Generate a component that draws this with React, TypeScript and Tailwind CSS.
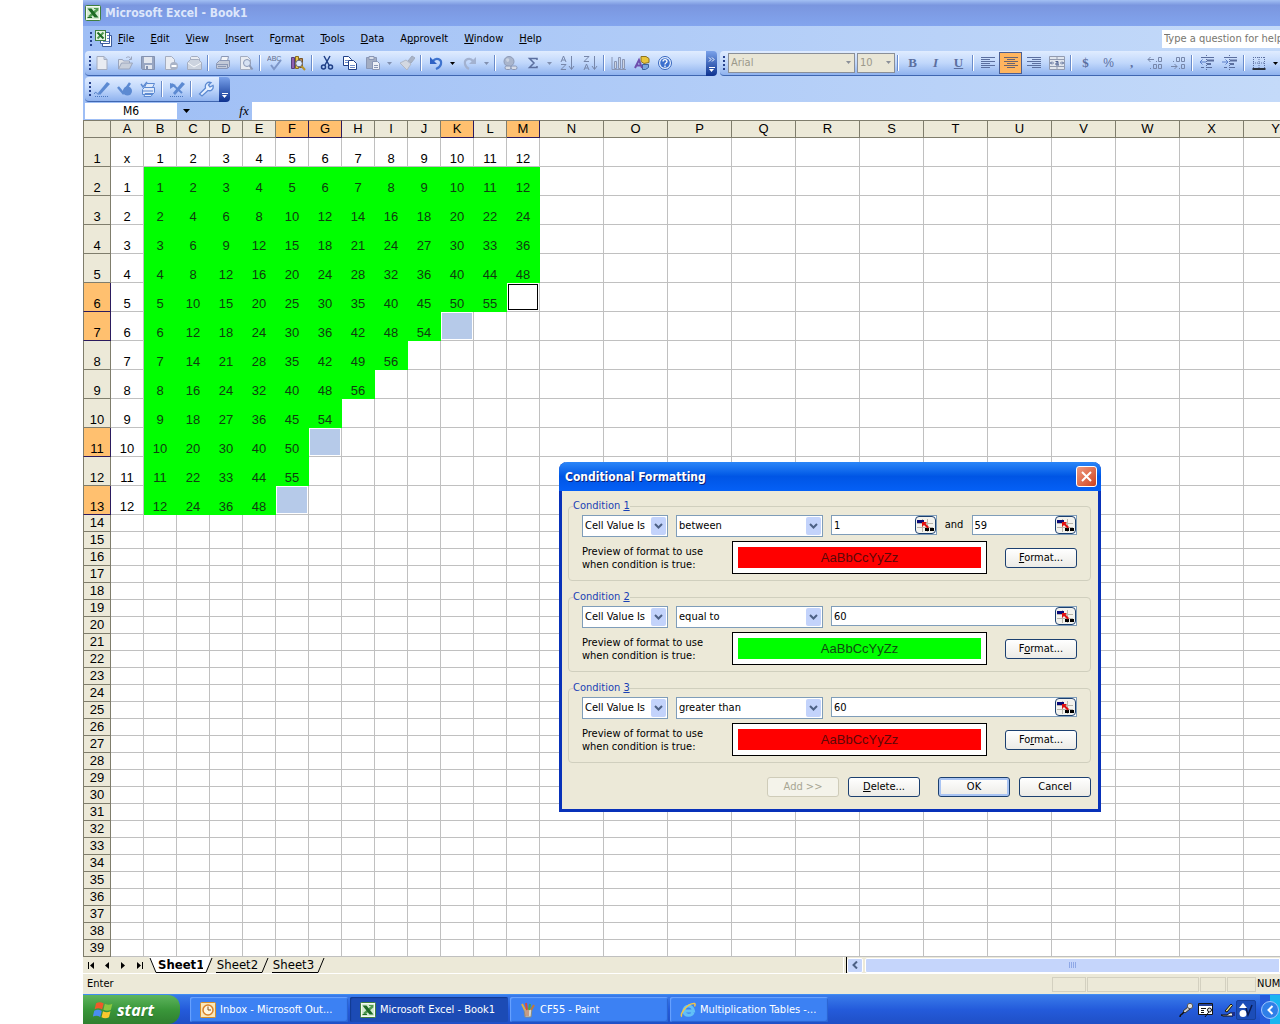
import type { ReactNode } from "react";
import { clsx } from "clsx";

const g = "#8a97b5";
const navy = "#1f3f86";

const Svg = ({ children, size = 16 }: { children: ReactNode; size?: number }) => (
  <svg width={size} height={size} viewBox="0 0 16 16" fill="none" className="shrink-0">
    {children}
  </svg>
);

const icons: Record<string, ReactNode> = {
  New: <path d="M3 1.500h7l3 3v10H3zM10 1.500v3h3" fill="#e9ecf2" stroke="#a4adc0" />,
  Open: (
    <>
      <path d="M1.500 14V4.500h4l1 1.500h6V8" fill="#dfe2e8" stroke="#9aa5bd" />
      <path d="M1.500 14l3-6h11l-3 6z" fill="#c8cfdb" stroke="#9aa5bd" />
      <path d="M9 3c2-2 4-1 5 1M14.500 1.500V4.500H12" stroke="#9aa5bd" />
    </>
  ),
  Save: (
    <>
      <path d="M1.500 1.500h13v13h-12l-1-1z" fill="#98a6c2" stroke="#8492b0" />
      <path d="M4 2h8v6H4zM5 10h7v4H5z" fill="#e3e7ef" />
      <path d="M6 11h2v3H6z" fill="#8492b0" />
    </>
  ),
  Permission: (
    <>
      <path d="M2.500 1.500h6l3 3v10h-9z" fill="#e9ecf2" stroke="#a4adc0" />
      <circle cx="11" cy="11" r="4" fill="#a9b3c6" />
      <path d="M8.500 11h5" stroke="#fff" strokeWidth="2" />
    </>
  ),
  "E-mail": (
    <>
      <path d="M4.500 5V2.500l1-1h6l2 2V8" fill="#e9ecf2" stroke="#a4adc0" />
      <path d="M1.500 7.500l3-3h8l3 3v7h-14z" fill="#ccd3df" stroke="#a4adc0" />
      <path d="M2 8l6 4 7-4" stroke="#f6f8fb" />
    </>
  ),
  Print: (
    <>
      <path d="M5.500 6l1-4.500h7l-1 4.500" fill="#f2f4f8" stroke={g} />
      <path d="M1.500 8.500l3-3h10v6l-2 2h-11z" fill="#c3cad8" stroke={g} />
      <path d="M2 9.500h10M3 11.500h8M12.500 9v4" stroke={g} />
    </>
  ),
  "Print Preview": (
    <>
      <path d="M2.500 1.500h7l3 3v10h-10z" fill="#e9ecf2" stroke="#a4adc0" />
      <circle cx="9" cy="8" r="3.500" fill="#d7e2f3" stroke={g} />
      <path d="M11.500 10.500l3 4" stroke={g} strokeWidth="2" />
    </>
  ),
  Spelling: (
    <>
      <text x="0" y="6" fontSize="7" fill="#5f6d8c" className="font-['Liberation_Sans',sans-serif]">ABC</text>
      <path d="M4 10l3 4 7-9" stroke="#7d96c8" strokeWidth="2" />
    </>
  ),
  Research: (
    <>
      <path d="M1.500 2.500h3v11h-3z" fill="#8f5fb0" stroke="#55407c" />
      <path d="M5.500 1.500h3v12h-3z" fill="#e8c84a" stroke="#8a6c1d" />
      <path d="M9.500 3.500h3v9h-3z" fill="#b98a54" stroke="#775427" />
      <circle cx="9" cy="8.500" r="3.300" fill="#dbe9fb" stroke="#6a6a78" />
      <path d="M11.500 11l3.500 4" stroke="#b5932d" strokeWidth="2" />
    </>
  ),
  Cut: (
    <>
      <path d="M5 1l5 9M11 1L6 10" stroke={navy} strokeWidth="1.500" />
      <circle cx="4.500" cy="12" r="2" stroke={navy} strokeWidth="1.500" />
      <circle cx="11.500" cy="12" r="2" stroke={navy} strokeWidth="1.500" />
    </>
  ),
  Copy: (
    <>
      <path d="M1.500 1.500h5l3 3v6h-8z" fill="#fff" stroke={navy} />
      <path d="M6.500 5.500h5l3 3v6h-8z" fill="#fff" stroke={navy} />
      <path d="M3 5.500h3M3 7.500h3M8 10.500h5M8 12.500h5" stroke="#6e8cc8" />
    </>
  ),
  Paste: (
    <>
      <path d="M1.500 2.500h10v11h-10z" fill="#a3adc2" stroke={g} />
      <path d="M4 1.500h5v3H4z" fill="#d9dee8" stroke={g} />
      <path d="M7.500 6.500h5l2 2v6h-7z" fill="#eef1f6" stroke={g} />
      <path d="M9 10.500h4M9 12.500h4" stroke={g} />
    </>
  ),
  "Format Painter": (
    <>
      <path d="M9 6l4-5 3 2-4 5z" fill="#aab4c6" stroke="#a0aabd" />
      <path d="M1 8l6-3 5 4-4 6z" fill="#d3d8e1" stroke="#b0b8c7" />
    </>
  ),
  Undo: (
    <>
      <path d="M5 6c3-4 9-2 8 3-.5 3-3 4-5 5" stroke="#3f74cf" strokeWidth="2.200" />
      <path d="M2 2v7h7z" fill="#2f62c4" />
    </>
  ),
  Redo: (
    <>
      <path d="M11 6c-3-4-9-2-8 3 .5 3 2 4 4 5" stroke="#a3b2d0" strokeWidth="2.200" />
      <path d="M14 2v7H7z" fill="#a3b2d0" />
    </>
  ),
  Hyperlink: (
    <>
      <circle cx="7" cy="6.500" r="5" fill="#a9b5cc" stroke="#8e9bb6" />
      <path d="M4 4c2-2 4 0 3 2s-3 1-3-2z" fill="#c9d1e0" />
      <rect x="3" y="11" width="6" height="3.500" rx="1.700" stroke={g} fill="#d5dbe7" />
      <rect x="9" y="11" width="6" height="3.500" rx="1.700" stroke={g} fill="#d5dbe7" />
    </>
  ),
  AutoSum: <path d="M12 5V3.500H4.500L9 8l-4.500 4.500H12V11" stroke="#5b6f9f" strokeWidth="1.500" />,
  "Sort Ascending": (
    <>
      <path d="M2 7l2.500-6L7 7M3 5h3M2 9.500h5l-5 5h5" stroke="#7787aa" />
      <path d="M12.500 1v13M10 11l2.500 3.500L15 11" stroke="#7787aa" />
    </>
  ),
  "Sort Descending": (
    <>
      <path d="M2 1.500h5l-5 5h5M2 15l2.500-6L7 15M3 13h3" stroke="#7787aa" />
      <path d="M12.500 1v13M10 11l2.500 3.500L15 11" stroke="#7787aa" />
    </>
  ),
  "Chart Wizard": (
    <>
      <path d="M1 2v12.500h14" stroke={g} />
      <path d="M3.500 6.500h2v7h-2zM7.500 2.500h2v11h-2zM11.500 4.500h2v9h-2z" fill="#cdd4e1" stroke={g} />
    </>
  ),
  Drawing: (
    <>
      <path d="M7 1.500h5l3 2v4l-5 1-3-2z" fill="#e9c53b" stroke="#8d7321" />
      <path d="M8.500 9.500h6v3l-3 2h-3z" fill="#7aa5de" stroke="#39619f" />
      <path d="M1 13l4-8 3 8M2.500 10.500h5" stroke="#6e4fae" strokeWidth="2" />
    </>
  ),
  "Microsoft Excel Help": (
    <>
      <circle cx="8" cy="8" r="6.500" fill="#e8f1ff" stroke="#3565be" />
      <circle cx="8" cy="8" r="4.800" fill="#3c70cf" />
      <path d="M6 6.500c0-2.500 4-2.500 4 0 0 1.300-2 1.300-2 3M8 10.500V12" stroke="#fff" strokeWidth="1.300" />
    </>
  ),
  "Align Left": <path d="M1 2.500h14M1 4.500h9M1 6.500h14M1 8.500h9M1 10.500h14M1 12.500h9" stroke="#5b6f9f" />,
  Center: <path d="M1 2.500h14M4 4.500h8M1 6.500h14M4 8.500h8M1 10.500h14M4 12.500h8" stroke="#6b6470" />,
  "Align Right": <path d="M1 2.500h14M6 4.500h9M1 6.500h14M6 8.500h9M1 10.500h14M6 12.500h9" stroke="#5b6f9f" />,
  "Merge and Center": (
    <>
      <path d="M0.500 1.500h15v13H0.500zM0.500 4.500h15M0.500 11.500h15M8 2v3M8 11v3" fill="#e1e6ee" stroke="#929bb0" />
      <path d="M1 8h4M15 8h-4M3 6.500L1.500 8 3 9.500M13 6.500L14.500 8 13 9.500" stroke="#66779e" />
      <path d="M6.500 6.500h2.500v3.500M9 8H7v2h3" stroke="#4e6090" />
    </>
  ),
  "Increase Decimal": (
    <>
      <path d="M1 4.500h6M3.500 2L1 4.500 3.500 7" stroke="#7787aa" />
      <path d="M9 6.500h1M3 13.500h1" stroke="#7787aa" />
      <path d="M11.500 2.500h3v4h-3zM6.500 9.500h3v4h-3zM11.500 9.500h3v4h-3z" stroke="#7787aa" />
    </>
  ),
  "Decrease Decimal": (
    <>
      <path d="M1 11.500h6M4.500 9L7 11.500 4.500 14" stroke="#7787aa" />
      <path d="M3 6.500h1M9 13.500h1" stroke="#7787aa" />
      <path d="M6.500 2.500h3v4h-3zM11.500 2.500h3v4h-3zM11.500 9.500h3v4h-3z" stroke="#7787aa" />
    </>
  ),
  "Decrease Indent": (
    <>
      <path d="M2 2.500h13M8 12.500h5M2 12.500h3" stroke="#5b6f9f" />
      <path d="M8 5.500h7M8 9h4" stroke="#5b6f9f" strokeWidth="2" />
      <path d="M1 7h6M3.500 4.500L1 7l2.500 2.500" stroke="#5b7fc9" />
      <path d="M7.500 0v16" stroke="#5b6f9f" strokeDasharray="1 1" />
    </>
  ),
  "Increase Indent": (
    <>
      <path d="M2 2.500h13M8 12.500h5M2 12.500h3" stroke="#5b6f9f" />
      <path d="M8 5.500h7M8 9h4" stroke="#5b6f9f" strokeWidth="2" />
      <path d="M0 7h6M3.500 4.500L6 7 3.500 9.500" stroke="#5b7fc9" />
      <path d="M7.500 0v16" stroke="#5b6f9f" strokeDasharray="1 1" />
    </>
  ),
  Borders: (
    <>
      <path d="M2.500 2v11M8 2v11M13.500 2v11M2 2.500h12M2 8h12" stroke="#5b6f9f" strokeDasharray="1 1" />
      <path d="M1.500 14h13" stroke="#000" strokeWidth="1.500" />
    </>
  ),
  Sign: (
    <>
      <path d="M4 12l9-11 3 2L6 14z" fill="#5c8ad2" />
      <path d="M0 13c2-4 3 1 5 0" stroke="#4a78c0" />
      <path d="M1 15.500h14" stroke="#4a78c0" strokeDasharray="1 1" />
    </>
  ),
  Approve: (
    <>
      <circle cx="10.500" cy="10" r="4.500" fill="#5c8ad2" />
      <path d="M1 6l5 6 7-10" stroke="#5c8ad2" strokeWidth="2.500" />
    </>
  ),
  "Print Approved": (
    <>
      <path d="M1 3l2 3 4-5" stroke="#5c8ad2" strokeWidth="1.500" />
      <path d="M6.500 2.500h8l-2 4h-8zM2.500 8.500l2-2h10v5l-2 2h-10zM3 10h10M5 12.500h8l-2 3H4z" fill="#dfeafb" stroke="#5c8ad2" />
    </>
  ),
  "Remove Approval": (
    <>
      <path d="M3 3l10 9" stroke="#5c8ad2" strokeWidth="2" />
      <path d="M4 12l9-11 3 2L6 14z" fill="#5c8ad2" />
      <path d="M1 2v6l6-4z" fill="#5c8ad2" />
      <path d="M1 15.500h14" stroke="#4a78c0" strokeDasharray="1 1" />
    </>
  ),
  Settings: (
    <path
      d="M1.500 13l6-6c-1-4 2-6.500 5.500-5.500L10.500 4l1.500 2 3-1.500c1 3.500-2 6-5 5l-6 5.500z"
      fill="#e6f0ff"
      stroke="#5c8ad2"
      strokeWidth="1.300"
    />
  ),
};

const glyphs: Record<string, ReactNode> = {
  Bold: <b>B</b>,
  Italic: <i className="font-bold">I</i>,
  Underline: <b className="underline">U</b>,
  Currency: <b>$</b>,
  Percent: <span className="font-['Liberation_Sans',sans-serif] text-xs">%</span>,
  Comma: <b>,</b>,
};

// "|" is a separator, ":v" adds a drop-down arrow, ":on" makes that arrow black
const standardBar = [
  "New", "Open", "Save", "Permission", "E-mail", "|", "Print", "Print Preview", "|", "Spelling", "Research", "|",
  "Cut", "Copy", "Paste:v", "Format Painter", "|", "Undo:v:on", "Redo:v", "|", "Hyperlink", "AutoSum:v",
  "Sort Ascending", "Sort Descending", "|", "Chart Wizard", "Drawing", "Microsoft Excel Help",
];

const formatBar = [
  "|", "Bold", "Italic", "Underline", "|", "Align Left", "Center", "Align Right", "Merge and Center", "|",
  "Currency", "Percent", "Comma", "Increase Decimal", "Decrease Decimal", "|",
  "Decrease Indent", "Increase Indent", "|", "Borders:v:on",
];

const approveBar = ["Sign", "Approve", "Print Approved", "|", "Remove Approval", "|", "Settings"];

const menus = [
  { label: "File", key: 0 },
  { label: "Edit", key: 0 },
  { label: "View", key: 0 },
  { label: "Insert", key: 0 },
  { label: "Format", key: 1 },
  { label: "Tools", key: 0 },
  { label: "Data", key: 0 },
  { label: "ApproveIt", key: 1 },
  { label: "Window", key: 0 },
  { label: "Help", key: 0 },
];

const columns = "ABCDEFGHIJKLMNOPQRSTUVWXY".split("");
const activeColumns = ["F", "G", "K", "M"];
const activeRows = [6, 7, 11, 13];

const conditions = [
  { id: 1, op: "between", value: "1", value2: "59", fill: "bg-[#ff0000] text-[#5c0808]", key: 0 },
  { id: 2, op: "equal to", value: "60", fill: "bg-[#00ff00] text-[#104a10]", key: 1 },
  { id: 3, op: "greater than", value: "60", fill: "bg-[#ff0000] text-[#5c0808]", key: 2 },
];

function Mnemonic({ text, at }: { text: string; at: number }) {
  return (
    <span>
      {text.slice(0, at)}
      <u>{text[at]}</u>
      {text.slice(at + 1)}
    </span>
  );
}

function Triangle({ className }: { className?: string }) {
  return (
    <svg width="5" height="3" viewBox="0 0 5 3" className={className}>
      <path d="M0 0h5L2.500 3z" fill="currentColor" />
    </svg>
  );
}

function ExcelIcon() {
  return (
    <Svg>
      <rect x="0.500" y="0.500" width="15" height="15" rx="1" fill="#f4faf1" stroke="#3f7f3f" />
      <path d="M2 2h12v12H2z" fill="#d3ead0" />
      <path d="M13 4l-9 8" stroke="#4f9a50" strokeWidth="2.500" />
      <path d="M2.500 3.500h4l7 9h-4z" fill="#1d6b25" />
      <path d="M9 3.500h4.500" stroke="#4f9a50" />
      <path d="M2.500 12.500H7" stroke="#1d6b25" />
    </Svg>
  );
}

function Grip() {
  return (
    <span className="flex w-2 shrink-0 flex-col items-center gap-0.5">
      {[0, 1, 2, 3].map((i) => (
        <span key={i} className="size-0.5 bg-[#27418c]" />
      ))}
    </span>
  );
}

function ToolItems({ items }: { items: string[] }) {
  return items.map((item, i) => {
    if (item === "|") {
      return (
        <span key={i} className="flex w-1.5 shrink-0 justify-center">
          <span className="h-4 w-px bg-[#6a8ccb]" />
          <span className="h-4 w-px bg-white" />
        </span>
      );
    }
    const [name, drop, on] = item.split(":");
    return (
      <span key={i} className="flex shrink-0 items-center">
        <button
          aria-label={name}
          className={clsx(
            "flex h-[22px] w-[23px] items-center justify-center font-['Liberation_Serif',serif] text-[13px] text-[#5b6f9f]",
            name === "Center" && "border border-[#4b5f94] bg-[#ffb55f]"
          )}
        >
          {glyphs[name] ?? <Svg>{icons[name]}</Svg>}
        </button>
        {drop && (
          <button aria-label={name + " options"} className="flex h-5 w-[11px] items-center justify-center">
            <Triangle className={on ? "text-black" : "text-[#8190b0]"} />
          </button>
        )}
      </span>
    );
  });
}

const barClass =
  "flex h-[25px] shrink-0 items-center rounded-l-sm border-b border-[#3f66b0] bg-linear-to-b from-[#e0ecff] via-[#c0d7fb] to-[#8fb2ee]";
const capClass =
  "flex h-[25px] w-[11px] shrink-0 flex-col items-center justify-end gap-px rounded-r-sm bg-linear-to-b from-[#7aa1ea] to-[#0e318f] pb-1 text-white";

function ExcelTop() {
  return (
    <>
      <header className="flex h-[26px] items-center gap-1 overflow-hidden bg-linear-to-b from-[#a3c0f3] via-[#7a96df] via-20% to-[#83a5ee] pl-0.5 text-xs font-bold text-[#dce6fb]">
        <ExcelIcon />
        <h1>Microsoft Excel - Book1</h1>
      </header>

      <div className="bg-linear-to-r from-[#9ebef5] to-[#c4daf9]">
        <nav className="flex h-[25px] items-center pl-1">
          <Grip />
          <span className="mr-1.5 flex w-[17px] items-center">
            <svg width="17" height="17" viewBox="0 0 17 17" fill="none">
              <path d="M7.500 5.500h9v11h-9z" fill="#fff" stroke="#3b5b9b" />
              <path d="M5.500 2.500h9v11h-9z" fill="#fff" stroke="#3b5b9b" />
              <path d="M12 5.500h2M12 8.500h2M8 11.500h6" stroke="#6e8cc8" />
              <rect x="0.500" y="0.500" width="10" height="10" fill="#e5f3e1" stroke="#3f7f3f" />
              <path d="M8.500 2.500l-6 6" stroke="#4f9a50" strokeWidth="2" />
              <path d="M2.500 2.500l6 6" stroke="#1d6b25" strokeWidth="2" />
            </svg>
          </span>
          <div className="flex gap-4">
            {menus.map((m) => (
              <button key={m.label}>
                <Mnemonic text={m.label} at={m.key} />
              </button>
            ))}
          </div>
          <input
            aria-label="Type a question for help"
            placeholder="Type a question for help"
            className="ml-auto h-[18px] w-[118px] bg-white pl-0.5 placeholder:text-[#77766f]"
          />
        </nav>

        <div className="flex overflow-hidden">
          <div className="flex w-[634px] shrink-0 pl-0.5">
            <div className={clsx(barClass, "flex-1 pl-px")}>
              <Grip />
              <div className="-ml-1 flex items-center">
                <ToolItems items={standardBar} />
              </div>
            </div>
            <button aria-label="Standard toolbar options" className={capClass}>
              <svg width="7" height="5" viewBox="0 0 7 5" fill="none" className="mb-1">
                <path d="M1 0.500l2 2-2 2M4 0.500l2 2-2 2" stroke="#fff" />
              </svg>
              <span className="h-px w-1.5 bg-white" />
              <Triangle />
            </button>
          </div>
          <div className={clsx(barClass, "ml-[3px] flex-1")}>
            <Grip />
            <span className="relative mr-0.5">
              <select
                aria-label="Font"
                disabled
                className="block h-5 w-[127px] appearance-none border border-[#8a8f98] bg-[#e9e6d6] pl-0.5 text-[#9b998b] opacity-100"
              >
                <option>Arial</option>
              </select>
              <Triangle className="absolute top-2 right-1 text-[#8a8f98]" />
            </span>
            <span className="relative">
              <select
                aria-label="Font size"
                disabled
                className="block h-5 w-[38px] appearance-none border border-[#8a8f98] bg-[#e9e6d6] pl-0.5 text-[#9b998b] opacity-100"
              >
                <option>10</option>
              </select>
              <Triangle className="absolute top-2 right-1 text-[#8a8f98]" />
            </span>
            <ToolItems items={formatBar} />
          </div>
        </div>

        <div className="flex h-[26px] items-center pl-0.5">
          <div className={clsx(barClass, "pr-0.5 pl-px")}>
            <Grip />
            <div className="-ml-1 flex items-center">
              <ToolItems items={approveBar} />
            </div>
          </div>
          <button aria-label="ApproveIt toolbar options" className={capClass}>
            <span className="h-px w-1.5 bg-white" />
            <Triangle />
          </button>
        </div>

        <div className="flex h-[18px] items-center">
          <input
            aria-label="Name box"
            defaultValue="M6"
            className="ml-0.5 h-4 w-[92px] bg-white text-center text-xs"
          />
          <button aria-label="Names" className="flex h-4 w-[18px] items-center justify-center">
            <svg width="7" height="4" viewBox="0 0 7 4">
              <path d="M0 0h7L3.500 4z" />
            </svg>
          </button>
          <button
            aria-label="Insert function"
            className="ml-auto w-4 font-['Liberation_Serif',serif] text-[13px] leading-4 italic"
          >
            fx
          </button>
          <input aria-label="Formula bar" className="h-[18px] w-[calc(100%-169px)] bg-white" />
        </div>
      </div>
    </>
  );
}

const headCell = "overflow-hidden border-r border-b p-0 text-center font-normal";

function Sheet() {
  const rows = Array.from({ length: 39 }, (_, i) => i + 1);
  return (
    <div className="overflow-hidden bg-white font-['Liberation_Sans',Arial,sans-serif] text-[13px] leading-4">
      <table className="w-full table-fixed border-separate border-spacing-0">
        <colgroup>
          <col className="w-7" />
          {columns.map((c) => (
            <col key={c} className={c <= "M" ? "w-[33px]" : "w-16"} />
          ))}
        </colgroup>
        <thead>
          <tr>
            <th className={clsx(headCell, "h-[18px] border-t border-l border-[#7f7d6c] bg-[#ece9d8]")} />
            {columns.map((c) => (
              <th
                key={c}
                className={clsx(
                  headCell,
                  "border-t border-t-[#7f7d6c]",
                  activeColumns.includes(c)
                    ? "border-r-[#2b1b5e] border-b-[#2b1b5e] bg-[#ffc06f]"
                    : "border-r-[#7f7d6c] border-b-[#7f7d6c] bg-[#ece9d8]"
                )}
              >
                {c}
              </th>
            ))}
          </tr>
        </thead>
        <tbody>
          {rows.map((row) => (
            <tr key={row}>
              <th
                className={clsx(
                  headCell,
                  "border-l border-l-[#7f7d6c] align-bottom",
                  row <= 13 ? "h-[29px] leading-[14px]" : "h-[17px]",
                  activeRows.includes(row)
                    ? "border-r-[#2b1b5e] border-b-[#2b1b5e] bg-[#ffc06f]"
                    : "border-r-[#7f7d6c] border-b-[#7f7d6c] bg-[#ece9d8]"
                )}
              >
                {row}
              </th>
              {columns.map((c, col) => (
                <Cell key={c} row={row} col={col} />
              ))}
            </tr>
          ))}
        </tbody>
      </table>
    </div>
  );
}

function Cell({ row, col }: { row: number; col: number }) {
  const product = (row - 1) * col;
  const inGrid = row <= 13 && col <= 12;
  let text: string | number = "";
  if (row === 1 && col === 0) text = "x";
  else if (inGrid && row === 1) text = col;
  else if (inGrid && col === 0) text = row - 1;
  else if (inGrid && product < 60) text = product;

  const filled = inGrid && product > 0 && product < 60;
  const selected = inGrid && product === 60;
  return (
    <td
      className={clsx(
        "border-r border-b p-0 text-center align-bottom leading-[14px]",
        filled ? "border-[#00ff00] bg-[#00ff00] text-[#103c10]" : "border-[#c0c0c0]"
      )}
    >
      {selected ? (
        <div className={clsx("m-px h-[26px]", row === 6 ? "border border-black" : "bg-[#b6cae9]")} />
      ) : (
        text
      )}
    </td>
  );
}

function TabStrip() {
  return (
    <div className="flex h-[17px] items-stretch overflow-hidden border-b border-white bg-[#ece9d8]">
      <div className="flex w-[66px] items-center">
        <button aria-label="First sheet" className="flex w-4 justify-center">
          <svg width="7" height="7"><path d="M0 0h1v7H0zM6 0v7L2 3.500z" /></svg>
        </button>
        <button aria-label="Previous sheet" className="flex w-4 justify-center">
          <svg width="4" height="7"><path d="M4 0v7L0 3.500z" /></svg>
        </button>
        <button aria-label="Next sheet" className="flex w-4 justify-center">
          <svg width="4" height="7"><path d="M0 0v7l4-3.500z" /></svg>
        </button>
        <button aria-label="Last sheet" className="flex w-4 justify-center">
          <svg width="7" height="7"><path d="M6 0h1v7H6zM1 0v7l4-3.500z" /></svg>
        </button>
      </div>
      <div className="flex text-[13px] leading-4">
        {["Sheet1", "Sheet2", "Sheet3"].map((name, i) => (
          <button key={name} className={clsx("flex", i === 0 && "font-bold")}>
            {i === 0 && (
              <svg width="9" height="16"><path d="M0 0h9v16H7z" fill="#fff" /><path d="M1 1l6 14.500h2" stroke="#000" fill="none" /></svg>
            )}
            <span className={clsx("h-4 border-b border-black", i === 0 ? "w-[45px] bg-white" : "w-[43px]")}>{name}</span>
            <svg width="13" height="16">
              {i === 0 && <path d="M0 0h8L2 16H0z" fill="#fff" />}
              <path d="M0 15.500h3L9 1" stroke="#000" fill="none" />
            </svg>
          </button>
        ))}
      </div>
      <div className="ml-auto flex w-[437px] items-center">
        <span className="h-4 w-1 border-r border-l border-l-white border-r-black" />
        <button aria-label="Scroll left" className="flex h-[15px] w-4 items-center justify-center rounded-xs border border-white bg-[#c5d5fb]">
          <svg width="6" height="8"><path d="M5 0.500L1.500 4 5 7.500" stroke="#4d6185" strokeWidth="2" fill="none" /></svg>
        </button>
        <span className="ml-0.5 flex h-[15px] flex-1 items-center justify-center gap-px rounded-l-xs border border-white bg-[#c5d5fb]">
          {[0, 1, 2, 3].map((i) => (
            <span key={i} className="h-1.5 w-px bg-[#8fa8e6]" />
          ))}
        </span>
      </div>
    </div>
  );
}

function StatusBar() {
  const box = "h-[15px] border border-[#d3d0c0]";
  return (
    <footer className="flex h-5 items-center gap-px bg-[#ece9d8] pl-1">
      <span className="mr-auto">Enter</span>
      <span className={clsx(box, "w-[34px]")} />
      <span className={clsx(box, "w-[112px]")} />
      <span className={clsx(box, "w-[26px]")} />
      <span className={clsx(box, "w-[29px]")} />
      <span className="w-[23px] overflow-hidden whitespace-nowrap">NUM</span>
    </footer>
  );
}

const tasks = [
  {
    label: "Inbox - Microsoft Out...",
    icon: (
      <Svg>
        <rect x="0.500" y="0.500" width="15" height="15" rx="1" fill="#fbe7b8" stroke="#d78f2a" />
        <circle cx="8" cy="8" r="5" fill="#fff6df" stroke="#d9822b" strokeWidth="1.500" />
        <path d="M8 4.500V8h3" stroke="#8a5216" />
      </Svg>
    ),
  },
  { label: "Microsoft Excel - Book1", icon: <ExcelIcon />, active: true },
  {
    label: "CF55 - Paint",
    icon: (
      <Svg>
        <path d="M4 7h8l-1 8H5z" fill="#d8d8d0" stroke="#8a8a80" />
        <path d="M6 8v6M8 8v6" stroke="#b0603a" />
        <path d="M5 8L2 2" stroke="#e0b040" strokeWidth="2" />
        <path d="M7 8L6 1" stroke="#d84a3a" strokeWidth="2" />
        <path d="M9 8l1-6" stroke="#49a84c" strokeWidth="2" />
        <path d="M11 8l3-5" stroke="#c07a3a" strokeWidth="2" />
      </Svg>
    ),
  },
  {
    label: "Multiplication Tables -...",
    icon: (
      <Svg>
        <path d="M13 10.500c-1.500 4-8.500 4-9-1.500-.5-6 8.500-7 9.500 0H5" stroke="#62c0f7" strokeWidth="3" />
        <path d="M2 14.500C-1 13 7 1 14.500 1.500c1 .5.500 2 0 3" stroke="#f0c64a" strokeWidth="1.500" />
      </Svg>
    ),
  },
];

function Taskbar() {
  return (
    <div className="flex h-[30px] items-center border-t border-[#3f8cf3] bg-linear-to-b from-[#3a7bea] via-[#245bdb] to-[#1f4fc6]">
      <button className="flex h-full w-[97px] items-center gap-1 rounded-r-xl bg-linear-to-b from-[#5eb55e] via-[#3a973a] to-[#2f7f2f] pl-2.5 font-['Open_Sans',sans-serif] text-base font-bold text-white italic text-shadow-sm">
        <Svg size={20}>
          <path d="M2.500 2.500c2-1 4-1 6 .2L7.300 7.500c-2-1.200-4-1.200-6-.2z" fill="#f0592a" />
          <path d="M9.500 3c2 1 4 1 6 0l-1.200 4.800c-2 1-4 1-6 0z" fill="#8cc63f" />
          <path d="M1 8.500c2-1 4-1 6 .2l-1.200 4.800c-2-1.200-4-1.200-6-.2z" fill="#4a8df0" />
          <path d="M8 9c2 1 4 1 6 0l-1.200 4.800c-2 1-4 1-6 0z" fill="#fbc82e" />
        </Svg>
        start
      </button>
      <div className="ml-2.5 flex gap-0.5">
        {tasks.map((t) => (
          <button
            key={t.label}
            className={clsx(
              "flex h-[25px] w-[158px] items-center gap-1 rounded-xs pl-2.5 whitespace-nowrap text-white",
              t.active
                ? "bg-[#1c4bb5] shadow-[inset_1px_1px_1px_#123a90]"
                : "bg-[#3c81f3] shadow-[inset_1px_1px_1px_#6ba3ff,inset_-1px_-1px_1px_#2a62d0]"
            )}
          >
            {t.icon}
            <span>{t.label}</span>
          </button>
        ))}
      </div>
      <div className="ml-auto flex h-full items-center gap-1">
        <Svg>
          <path d="M2 15c0-3 2-2 3-4l5-5" stroke="#111" strokeWidth="1.500" />
          <path d="M5 9l5-4 2 2-5 4z" fill="#ccc" stroke="#333" />
          <circle cx="12" cy="4" r="2.700" fill="#ddd" stroke="#555" />
        </Svg>
        <Svg>
          <path d="M0.500 1.500h14v11h-14z" fill="#fff" stroke="#111" />
          <path d="M1 3h13" stroke="#24419a" strokeWidth="2" />
          <path d="M3 6.500h5M3 8.500h3M3 10.500h3M7 15l6-8" stroke="#111" />
          <circle cx="11.500" cy="8" r="2" fill="#ddd" stroke="#111" />
        </Svg>
        <span className="ml-0.5 flex items-center">
          <Svg>
            <path d="M5 9l6-7 1.500 1.500L7 10z" fill="#f3e27c" stroke="#111" />
            <path d="M1 13h6l3-2h3v3H3z" fill="#fff" stroke="#111" />
            <path d="M12 10h3v4h-3z" fill="#1c2f8a" />
          </Svg>
          <span className="flex size-5 items-center justify-center rounded-xs border border-[#16409c] bg-[#1c4db8]">
            <Svg>
              <path d="M5 1l4 5H1z" fill="#fff" />
              <circle cx="5" cy="11.500" r="3.500" fill="#fff" />
              <path d="M8 6l2 7 4-10" stroke="#0b1c50" strokeWidth="1.500" />
            </Svg>
          </span>
        </span>
        <button
          aria-label="Show hidden icons"
          className="flex h-full w-5 items-center justify-center bg-linear-to-r from-[#245bdb] from-50% to-[#19b5f0] to-50%"
        >
          <span className="flex size-[18px] items-center justify-center rounded-full border border-[#9fc6ff] bg-[#2f7fe8]">
            <svg width="7" height="10"><path d="M5.500 1L1.500 5l4 4" stroke="#fff" strokeWidth="2" fill="none" /></svg>
          </span>
        </button>
      </div>
    </div>
  );
}

function Combo({ label, value, className }: { label: string; value: string; className: string }) {
  return (
    <span className={clsx("relative shrink-0", className)}>
      <select aria-label={label} className="block h-[22px] w-full appearance-none border border-[#7f9db9] bg-white pl-0.5">
        <option>{value}</option>
      </select>
      <span className="pointer-events-none absolute top-0.5 right-0.5 flex h-[18px] w-[15px] items-center justify-center rounded-xs bg-[#c3d3fb]">
        <svg width="9" height="6"><path d="M1 1l3.500 3.500L8 1" stroke="#4d6185" strokeWidth="2" fill="none" /></svg>
      </span>
    </span>
  );
}

function RefInput({ label, value }: { label: string; value: string }) {
  return (
    <span className="relative min-w-0 flex-1">
      <input
        aria-label={label}
        defaultValue={value}
        className="block h-5 w-full border border-[#7f9db9] bg-white pl-0.5"
      />
      <button
        aria-label={label + " reference"}
        className="absolute top-px right-px flex h-[18px] w-[21px] items-center justify-center rounded-sm border border-[#1c4070] bg-[#f4f3ee]"
      >
        <svg width="17" height="13" viewBox="0 0 17 13">
          <path d="M0 4.500h16M0 8.500h16M5.500 0v13M10.500 0v13" stroke="#b9b6ac" />
          <path d="M0 1h7v3H0z" fill="#0a0a78" />
          <path d="M8 9h4v3H8zM13 9h4v3h-4z" fill="#000" />
          <path d="M5 3h5L8.500 4.500l3.500 3.500-1.500 1.500L7 6 5 8z" fill="#e01010" />
        </svg>
      </button>
    </span>
  );
}

const pushButton =
  "h-5 w-[72px] rounded-[3px] border border-[#1c4070] bg-linear-to-b from-white to-[#ecebe6] text-center";

function ConditionalFormatting() {
  return (
    <section
      role="dialog"
      aria-label="Conditional Formatting"
      className="absolute top-[462px] left-[559px] w-[542px] rounded-t-lg border-x-[3px] border-b-[3px] border-[#0831b9] bg-[#ece9d8]"
    >
      <div className="-mx-[3px] flex h-[29px] items-center justify-between rounded-t-lg bg-linear-to-b from-[#2b86f8] via-[#0055e5] to-[#0560f6] pr-1 pl-1.5">
        <h2 className="text-xs font-bold text-white text-shadow-[1px_1px_0_#0a1f7a]">Conditional Formatting</h2>
        <button
          aria-label="Close"
          className="flex size-[21px] items-center justify-center rounded-[3px] border border-white bg-linear-to-br from-[#ee9a7f] to-[#cf3e17]"
        >
          <svg width="11" height="11"><path d="M1 1l9 9M10 1l-9 9" stroke="#fff" strokeWidth="2" /></svg>
        </button>
      </div>
      <form className="flex flex-col gap-[9px] pt-2 pr-[7px] pb-3 pl-1.5" onSubmit={(e) => e.preventDefault()}>
        {conditions.map((c) => (
          <fieldset key={c.id} className="h-[82px] min-w-0 rounded-sm border border-[#d0cfbe] px-[13px]">
            <legend className="-ml-[9px] h-3.5 text-[#1a41b5]">
              Condition <u>{c.id}</u>
            </legend>
            <div className="mt-0.5 flex">
              <Combo label={`Condition ${c.id} type`} value="Cell Value Is" className="mr-2 w-[86px]" />
              <Combo label={`Condition ${c.id} operator`} value={c.op} className="mr-2 w-[147px]" />
              <RefInput label={`Condition ${c.id} value`} value={c.value} />
              {c.value2 && (
                <>
                  <span className="w-[35px] pt-[3px] text-center">and</span>
                  <RefInput label={`Condition ${c.id} second value`} value={c.value2} />
                </>
              )}
            </div>
            <div className="mt-1 flex items-center">
              <p className="w-[150px] leading-[13px]">
                Preview of format to use
                <br />
                when condition is true:
              </p>
              <div className="w-[255px] border border-black bg-white p-[5px]">
                <div
                  className={clsx(
                    "h-[21px] text-center font-['Liberation_Sans',Arial,sans-serif] text-[13px] leading-[21px]",
                    c.fill
                  )}
                >
                  AaBbCcYyZz
                </div>
              </div>
              <button className={clsx(pushButton, "ml-auto")}>
                <Mnemonic text="Format..." at={c.key} />
              </button>
            </div>
          </fieldset>
        ))}
        <div className="mt-[5px] flex justify-end gap-[9px]">
          <button disabled className="h-5 w-[72px] rounded-[3px] border border-[#cfccb9] bg-[#f4f3ea] text-[#a7a592]">
            Add &gt;&gt;
          </button>
          <button className={pushButton}>
            <Mnemonic text="Delete..." at={0} />
          </button>
          <button className={clsx(pushButton, "ml-[9px] shadow-[inset_0_0_0_2px_#a9c4f3]")}>OK</button>
          <button className={pushButton}>Cancel</button>
        </div>
      </form>
    </section>
  );
}

export default function App() {
  return (
    <main className="relative overflow-hidden bg-white pl-[83px] font-['DejaVu_Sans_Condensed','Noto_Sans',sans-serif] text-[11px] leading-[14px] text-black">
      <ExcelTop />
      <Sheet />
      <TabStrip />
      <StatusBar />
      <Taskbar />
      <ConditionalFormatting />
    </main>
  );
}
